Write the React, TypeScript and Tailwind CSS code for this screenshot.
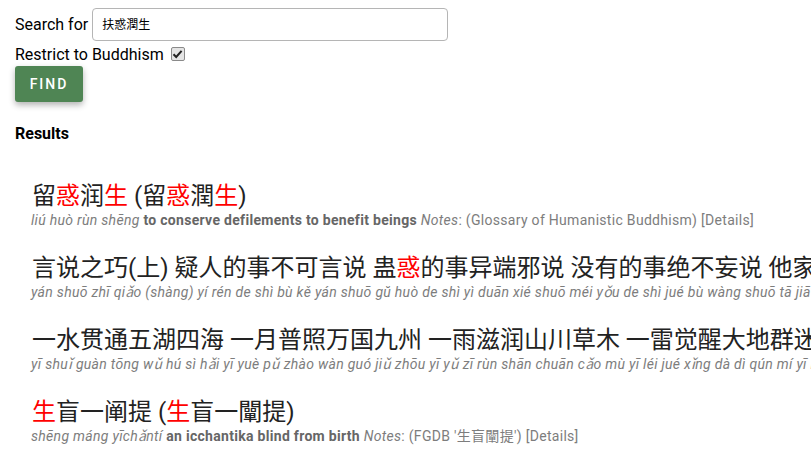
import React from "react";

const R = ({ children }: { children: React.ReactNode }) => (
  <span className="text-[#ff0000]">{children}</span>
);

function Entry({
  head,
  pinyin,
  english,
  notes,
}: {
  head: React.ReactNode;
  pinyin: string;
  english?: string;
  notes?: string;
}) {
  return (
    <div className="pl-[17px] mb-[24px] whitespace-nowrap">
      <div className="h-[28px] leading-[28px] text-[24px] text-[#222]">{head}</div>
      <div className="h-[20px] leading-[20px] text-[14px] text-[#7d7d7d] tracking-[0.3px] -ml-px">
        <span className="italic">{pinyin}</span>
        {english && (
          <>
            {" "}
            <span className="font-bold text-[#666]">{english}</span>
          </>
        )}
        {notes && (
          <>
            {" "}
            <span className="italic">Notes</span>: {notes} <span>[Details]</span>
          </>
        )}
      </div>
    </div>
  );
}

export default function App() {
  return (
    <div className="w-[811px] h-[456px] overflow-hidden bg-white text-black text-[16px] font-['Roboto','Noto_Sans_CJK_SC',sans-serif] pl-[15px]">
      <div className="pt-[8px] flex items-center h-[41px]">
        <span className="leading-[24px]">Search for</span>
        <div className="ml-[4px] w-[356px] h-[33px] border border-[#b5b5b5] rounded-[4px] flex items-center px-[9px] text-[12px] text-black">
          扶惑潤生
        </div>
      </div>
      <div className="mt-[3px] h-[22px] flex items-center">
        <span>Restrict to Buddhism</span>
        <span className="ml-[7px] -mt-[2px] w-[14px] h-[14px] rounded-[2px] border border-[#8a8a8a] bg-[#e4e4e4] flex items-center justify-center">
          <svg width="11" height="10" viewBox="0 0 11 10">
            <path d="M1.5 5.2 L4.2 8 L9.6 1.8" fill="none" stroke="#222" strokeWidth="2" />
          </svg>
        </span>
      </div>
      <button className="w-[68px] h-[36px] rounded-[3px] bg-[#4f8554] text-white text-[14px] font-medium tracking-[2px] shadow-[0_3px_6px_rgba(0,0,0,0.3)] flex items-center justify-center">
        FIND
      </button>
      <div className="mt-[20px] h-[24px] leading-[24px] font-bold">Results</div>
      <div className="mt-[36px]">
        <Entry
          head={
            <>
              留<R>惑</R>润<R>生</R> (留<R>惑</R>潤<R>生</R>)
            </>
          }
          pinyin="liú huò rùn shēng"
          english="to conserve defilements to benefit beings"
          notes="(Glossary of Humanistic Buddhism)"
        />
        <Entry
          head={
            <>
              言说之巧(上) 疑人的事不可言说 蛊<R>惑</R>的事异端邪说 没有的事绝不妄说 他家
            </>
          }
          pinyin="yán shuō zhī qiǎo (shàng) yí rén de shì bù kě yán shuō gŭ huò de shì yì duān xié shuō méi yǒu de shì jué bù wàng shuō tā jiā"
        />
        <Entry
          head={<>一水贯通五湖四海 一月普照万国九州 一雨滋润山川草木 一雷觉醒大地群迷</>}
          pinyin="yī shuǐ guàn tōng wǔ hú sì hǎi yī yuè pǔ zhào wàn guó jiǔ zhōu yī yǔ zī rùn shān chuān cǎo mù yī léi jué xǐng dà dì qún mí yī lǐ"
        />
        <Entry
          head={
            <>
              <R>生</R>盲一阐提 (<R>生</R>盲一闡提)
            </>
          }
          pinyin="shēng máng yīchǎntí"
          english="an icchantika blind from birth"
          notes="(FGDB '生盲闡提')"
        />
      </div>
    </div>
  );
}
